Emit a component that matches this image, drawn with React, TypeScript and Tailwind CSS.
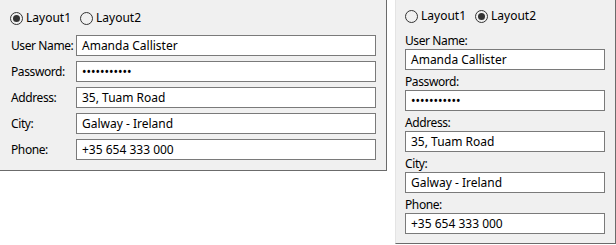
import React from 'react';

const fields = [
  { label: 'User Name:', value: 'Amanda Callister' },
  { label: 'Password:', value: '•••••••••••' },
  { label: 'Address:', value: '35, Tuam Road' },
  { label: 'City:', value: 'Galway - Ireland' },
  { label: 'Phone:', value: '+35 654 333 000' },
];

const Radio = ({ checked, label }: { checked: boolean; label: string }) => (
  <label className="flex items-center gap-[3px]">
    <span className="flex h-[13px] w-[13px] items-center justify-center rounded-full border border-[#333333]">
      {checked && <span className="h-[7px] w-[7px] rounded-full bg-[#333333]" />}
    </span>
    <span>{label}</span>
  </label>
);

const Box = ({ value, className }: { value: string; className: string }) => (
  <div
    className={`flex h-[21px] shrink-0 items-center border border-[#7a7a7a] bg-white pl-[5px] ${className}`}
  >
    {value}
  </div>
);

// 가로형 레이아웃
const InlineForm = () => (
  <section className="h-[171px] w-[387px] shrink-0 border-r border-b border-[#6b6b6b] bg-[#f0f0f0] pt-[11px] pl-[10px]">
    <div className="flex h-[14px] items-center gap-[9px]">
      <Radio checked label="Layout1" />
      <Radio checked={false} label="Layout2" />
    </div>
    <div className="mt-[10px] flex flex-col gap-[5px]">
      {fields.map((f) => (
        <div key={f.label} className="flex items-center">
          <span className="w-[66px] shrink-0 pl-[1px] tracking-[-0.4px] whitespace-nowrap">
            {f.label}
          </span>
          <Box value={f.value} className="w-[300px]" />
        </div>
      ))}
    </div>
  </section>
);

// 세로형 레이아웃
const StackedForm = () => (
  <section className="ml-[8px] h-[244px] w-[221px] shrink-0 border-r border-b border-l border-r-[#6b6b6b] border-b-[#6b6b6b] border-l-[#e4e4e4] bg-[#f0f0f0] pt-[9px] pl-[9px]">
    <div className="flex h-[14px] items-center gap-[9px]">
      <Radio checked={false} label="Layout1" />
      <Radio checked label="Layout2" />
    </div>
    <div className="mt-[10px] flex flex-col gap-[4px]">
      {fields.map((f) => (
        <div key={f.label} className="flex flex-col">
          <span className="h-[16px] leading-[16px] tracking-[-0.4px] whitespace-nowrap">
            {f.label}
          </span>
          <Box value={f.value} className="w-[200px]" />
        </div>
      ))}
    </div>
  </section>
);

export default function App() {
  return (
    <div className="flex h-[245px] w-[616px] items-start bg-white font-['Segoe_UI','Noto_Sans',sans-serif] text-[12px] text-black">
      <InlineForm />
      <StackedForm />
    </div>
  );
}
